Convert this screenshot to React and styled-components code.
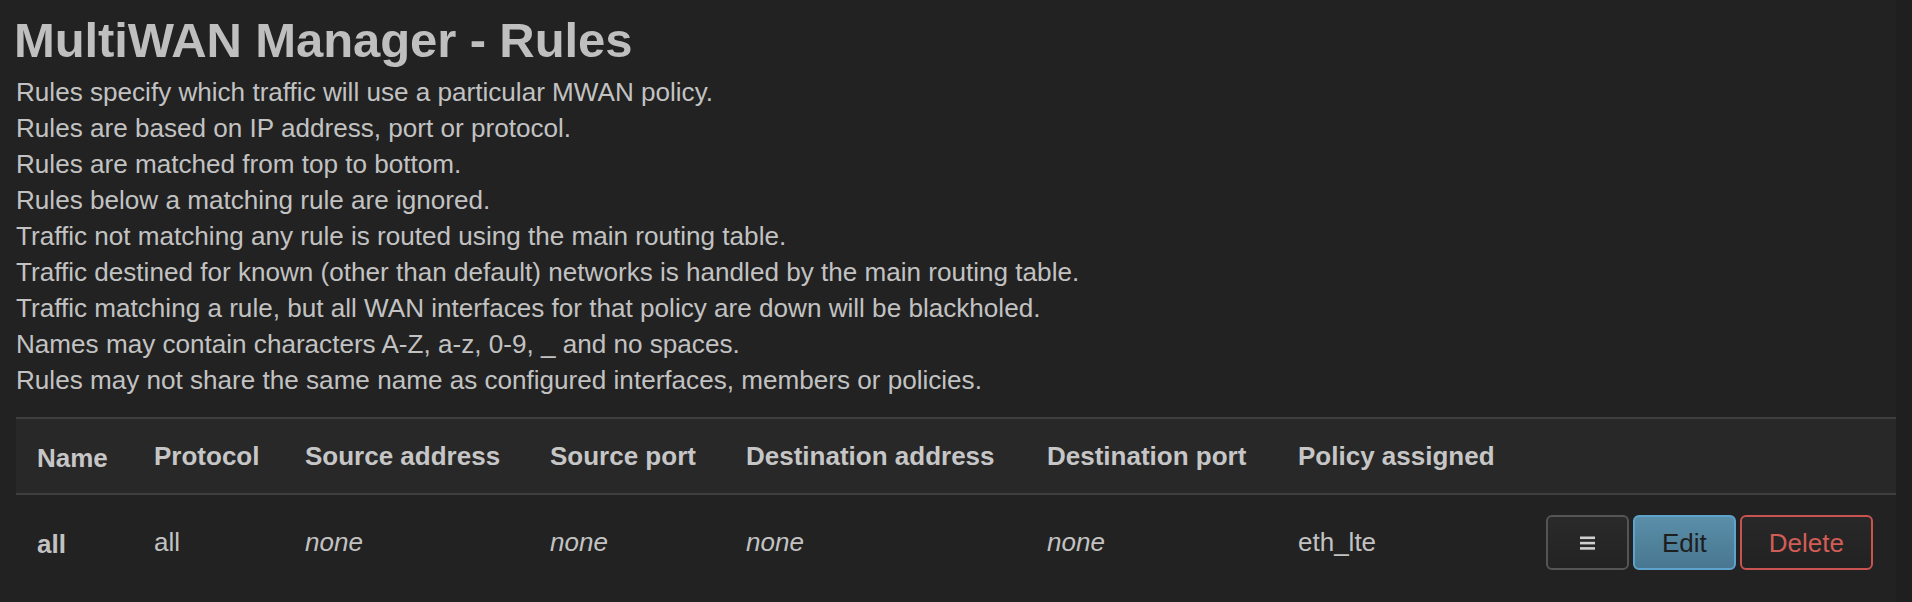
import React from "react";
import styled, { createGlobalStyle } from "styled-components";

const GlobalStyle = createGlobalStyle`
  html, body {
    margin: 0;
    padding: 0;
    background: #1f1f1f;
  }
  * {
    box-sizing: border-box;
  }
`;

const Page = styled.div`
  width: 1896px;
  min-height: 100vh;
  padding: 14px 0 0 16px;
  background: #222222;
  color: #bdbdbd;
  font-family: "Liberation Sans", Arial, Helvetica, sans-serif;
`;

const Title = styled.h2`
  margin: 0 0 0 -2px;
  font-size: 49px;
  line-height: 52px;
  font-weight: bold;
  color: #bfbfbf;
  letter-spacing: -0.1px;
`;

const Description = styled.div`
  margin-top: 8px;
  font-size: 26.1px;
  line-height: 36px;
  color: #c2c2c2;
`;

const Table = styled.table`
  margin-top: 19px;
  width: 1880px;
  table-layout: fixed;
  border-collapse: collapse;
  font-size: 26px;
  line-height: 30px;
`;

const Col = styled.col`
  width: ${(p) => (p.$w ? `${p.$w}px` : "auto")};
`;

const HeadRow = styled.tr`
  background: #282828;
  border-top: 2px solid #3e3e3e;
  border-bottom: 2px solid #3e3e3e;
`;

const Th = styled.th`
  text-align: left;
  font-weight: bold;
  color: #c6c6c6;
  padding: ${(p) => (p.$first ? "24px 21px 20px" : "22px 21px")};
  white-space: nowrap;
`;

const Td = styled.td`
  text-align: ${(p) => (p.$right ? "right" : "left")};
  vertical-align: middle;
  padding: ${(p) =>
    p.$right ? "20px 23px 20px 0" : p.$first ? "21px 21px 19px" : "19px 21px 21px"};
  font-weight: ${(p) => (p.$first ? "bold" : "normal")};
  font-style: ${(p) => (p.$none ? "italic" : "normal")};
  color: #c2c2c2;
  white-space: nowrap;
`;

const Actions = styled.div`
  display: inline-flex;
  gap: 4px;
`;

const Button = styled.button`
  height: 55px;
  padding: 0 27px;
  border-radius: 6px;
  border: 2px solid ${(p) => p.$border};
  background: ${(p) => p.$bg};
  color: ${(p) => p.$color};
  font-family: "Liberation Sans", Arial, Helvetica, sans-serif;
  font-size: 26px;
  line-height: 30px;
  display: inline-flex;
  align-items: center;
  justify-content: center;
  cursor: pointer;
`;

const MenuButton = styled(Button)`
  width: 83px;
  padding: 0;
`;

function MenuIcon() {
  return (
    <svg width="15" height="14" viewBox="0 0 15 14">
      <rect x="0" y="0.5" width="15" height="2.6" fill="#cfcfcf" />
      <rect x="0" y="5.8" width="15" height="2.6" fill="#cfcfcf" />
      <rect x="0" y="11.1" width="15" height="2.6" fill="#cfcfcf" />
    </svg>
  );
}

const lines = [
  "Rules specify which traffic will use a particular MWAN policy.",
  "Rules are based on IP address, port or protocol.",
  "Rules are matched from top to bottom.",
  "Rules below a matching rule are ignored.",
  "Traffic not matching any rule is routed using the main routing table.",
  "Traffic destined for known (other than default) networks is handled by the main routing table.",
  "Traffic matching a rule, but all WAN interfaces for that policy are down will be blackholed.",
  "Names may contain characters A-Z, a-z, 0-9, _ and no spaces.",
  "Rules may not share the same name as configured interfaces, members or policies.",
];

const columns = [
  { label: "Name", w: 117 },
  { label: "Protocol", w: 151 },
  { label: "Source address", w: 245 },
  { label: "Source port", w: 196 },
  { label: "Destination address", w: 301 },
  { label: "Destination port", w: 251 },
  { label: "Policy assigned", w: 240 },
];

const rules = [
  {
    name: "all",
    proto: "all",
    src: null,
    sport: null,
    dest: null,
    dport: null,
    policy: "eth_lte",
  },
];

export default function App() {
  return (
    <>
      <GlobalStyle />
      <Page>
        <Title>MultiWAN Manager - Rules</Title>
        <Description>
          {lines.map((l) => (
            <div key={l}>{l}</div>
          ))}
        </Description>
        <Table>
          <colgroup>
            {columns.map((c) => (
              <Col key={c.label} $w={c.w} />
            ))}
            <Col />
          </colgroup>
          <thead>
            <HeadRow>
              {columns.map((c, i) => (
                <Th key={c.label} $first={i === 0}>
                  {c.label}
                </Th>
              ))}
              <Th />
            </HeadRow>
          </thead>
          <tbody>
            {rules.map((r) => (
              <tr key={r.name}>
                <Td $first>{r.name}</Td>
                <Td>{r.proto}</Td>
                <Td $none={!r.src}>{r.src || "none"}</Td>
                <Td $none={!r.sport}>{r.sport || "none"}</Td>
                <Td $none={!r.dest}>{r.dest || "none"}</Td>
                <Td $none={!r.dport}>{r.dport || "none"}</Td>
                <Td>{r.policy}</Td>
                <Td $right>
                  <Actions>
                    <MenuButton
                      $border="#555555"
                      $bg="linear-gradient(#2a2a2a, #232323)"
                      $color="#cfcfcf"
                    >
                      <MenuIcon />
                    </MenuButton>
                    <Button
                      $border="#5fa3cc"
                      $bg="linear-gradient(#5a8fa9, #487690)"
                      $color="#1e1e1e"
                    >
                      Edit
                    </Button>
                    <Button
                      $border="#c9534e"
                      $bg="linear-gradient(#282828, #222222)"
                      $color="#d25d57"
                    >
                      Delete
                    </Button>
                  </Actions>
                </Td>
              </tr>
            ))}
          </tbody>
        </Table>
      </Page>
    </>
  );
}
